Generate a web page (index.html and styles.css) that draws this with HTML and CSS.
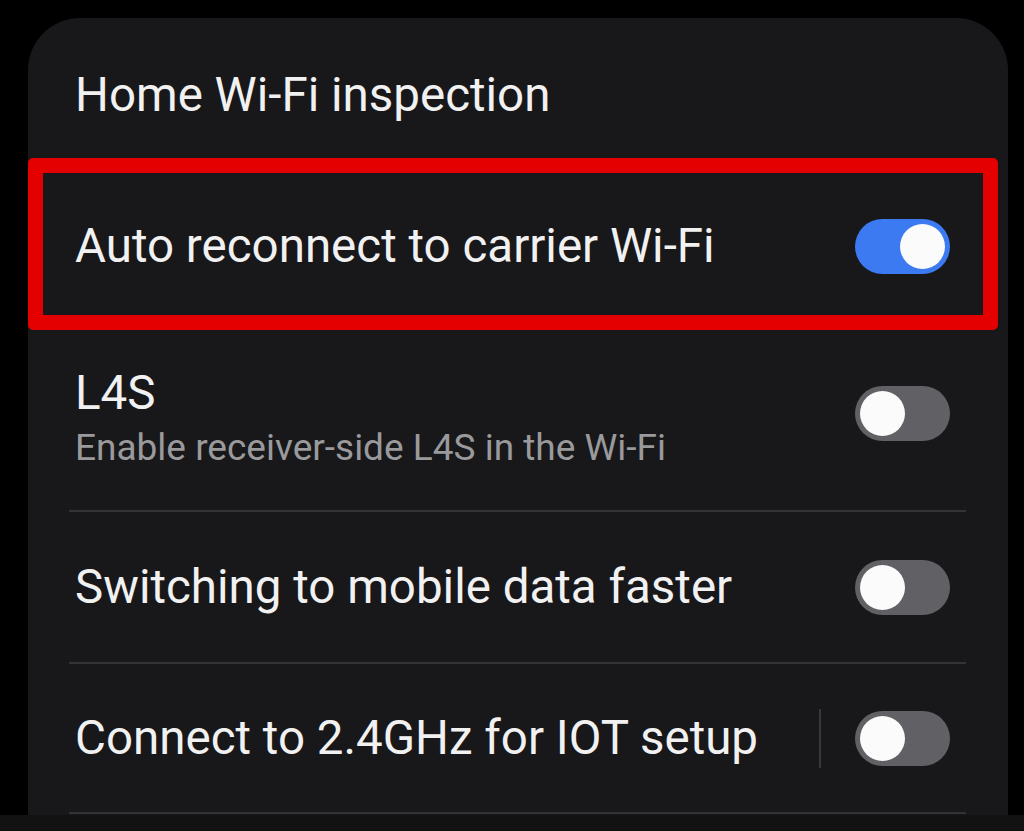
FILE: index.html
```html
<!DOCTYPE html>
<html lang="en">
<head>
<meta charset="utf-8">
<title>Wi-Fi settings</title>
<link rel="stylesheet" href="styles.css">
</head>
<body>
<div class="page">
  <section class="card">
    <div class="row row-first">
      <div class="title">Home Wi-Fi inspection</div>
    </div>
    <div class="row row-second">
      <div class="title">Auto reconnect to carrier Wi-Fi</div>
      <div class="switch on"><span class="knob"></span></div>
    </div>
    <div class="row row-third">
      <div class="text-block">
        <div class="title">L4S</div>
        <div class="subtitle">Enable receiver-side L4S in the Wi-Fi</div>
      </div>
      <div class="switch"><span class="knob"></span></div>
    </div>
    <div class="divider"></div>
    <div class="row row-fourth">
      <div class="title">Switching to mobile data faster</div>
      <div class="switch"><span class="knob"></span></div>
    </div>
    <div class="divider"></div>
    <div class="row row-fifth">
      <div class="title">Connect to 2.4GHz for IOT setup</div>
      <div class="controls">
        <span class="vsep"></span>
        <div class="switch"><span class="knob"></span></div>
      </div>
    </div>
    <div class="divider"></div>
    <div class="highlight"></div>
  </section>
  <div class="bottom-strip"></div>
</div>
</body>
</html>
```

FILE: styles.css
```css
* {
  box-sizing: border-box;
}

html, body {
  margin: 0;
  padding: 0;
  background: #000;
}

body {
  font-family: Roboto, "Liberation Sans", sans-serif;
  width: 1024px;
  height: 831px;
  overflow: hidden;
}

.page {
  display: flex;
  flex-direction: column;
  padding-top: 18px;
  height: 831px;
}

.card {
  position: relative;
  margin-left: 28px;
  width: 980px;
  height: 797px;
  background: #18181b;
  border-radius: 52px 52px 0 0;
  overflow: hidden;
  display: flex;
  flex-direction: column;
  flex-shrink: 0;
}

.bottom-strip {
  flex: 1;
  background: #121212;
}

.row {
  display: flex;
  align-items: center;
  justify-content: space-between;
  padding: 0 58px 0 47px;
  flex-shrink: 0;
}

.row-first {
  height: 158px;
  padding-bottom: 4px;
}

.row-second {
  height: 140px;
}

.row-third {
  height: 194px;
}

.row-fourth {
  height: 150px;
}

.row-fifth {
  height: 148px;
}

.title {
  color: #f1f1f1;
  font-size: 47.5px;
  line-height: 56px;
  white-space: nowrap;
}

.text-block {
  display: flex;
  flex-direction: column;
  margin-top: 14px;
}

.subtitle {
  color: #9a9a9c;
  font-size: 37px;
  line-height: 54px;
  white-space: nowrap;
}

.divider {
  height: 2px;
  margin: 0 42px 0 41px;
  background: #333336;
  flex-shrink: 0;
}

.controls {
  display: flex;
  align-items: center;
  gap: 34px;
}

.vsep {
  display: block;
  width: 2px;
  height: 59px;
  background: #38383b;
}

.switch {
  position: relative;
  width: 95px;
  height: 55px;
  border-radius: 28px;
  background: #616165;
  flex-shrink: 0;
}

.switch .knob {
  position: absolute;
  top: 5px;
  left: 5px;
  width: 45px;
  height: 45px;
  border-radius: 50%;
  background: #fbfbfb;
}

.switch.on {
  background: #3c7af2;
}

.switch.on .knob {
  left: auto;
  right: 5px;
}

.highlight {
  position: absolute;
  left: 0;
  top: 140px;
  width: 970px;
  height: 172px;
  border: 15px solid #e40000;
  border-radius: 5px;
  pointer-events: none;
}
```
